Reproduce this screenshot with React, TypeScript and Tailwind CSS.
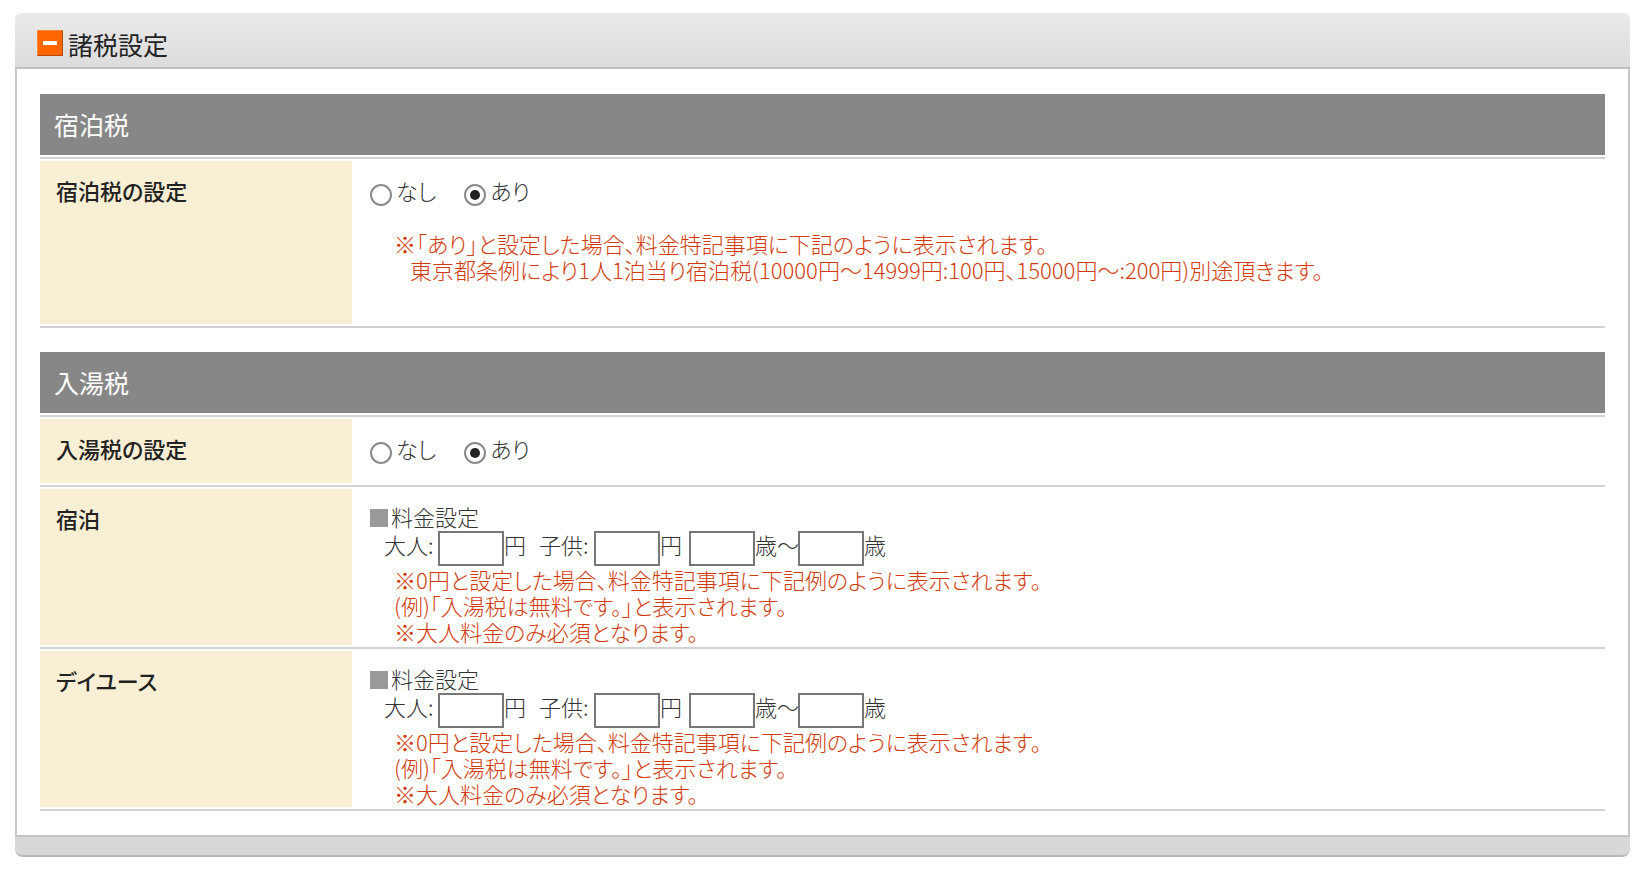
import React, { useState } from "react";

interface SectionProps {
  title: string;
  children: React.ReactNode;
}

const Section = ({ title, children }: SectionProps) => {
  return (
    <section>
      <div className="border-b-2 border-[#d2d2d2] pb-0.5">
        <h2 className="bg-[#878787] px-[14px] py-3 text-[25px] leading-[37px] font-normal text-white">
          {title}
        </h2>
      </div>
      {children}
    </section>
  );
};

interface RowProps {
  label: string;
  className?: string;
  children: React.ReactNode;
}

const Row = ({ label, className = "", children }: RowProps) => {
  return (
    <div className="flex border-b-2 border-[#d2d2d2] py-0.5">
      <h3 className="w-[312px] shrink-0 bg-[#f9efd5] px-4 pt-4 text-[22px] leading-[26px] font-medium text-[#222]">
        {label}
      </h3>
      <div className={`min-w-0 flex-1 pl-[18px] ${className}`}>{children}</div>
    </div>
  );
};

interface TaxRadioProps {
  name: string;
  label: string;
}

const TaxRadio = ({ name, label }: TaxRadioProps) => {
  const [value, setValue] = useState("あり");

  return (
    <div role="radiogroup" aria-label={label} className="flex gap-7">
      {["なし", "あり"].map((option) => (
        <label key={option} className="flex items-start gap-1">
          <input
            type="radio"
            name={name}
            value={option}
            checked={value === option}
            onChange={() => setValue(option)}
            className="mt-[7px] size-[22px] appearance-none rounded-full border-2 border-[#8a8a8a] bg-white p-1 checked:bg-[#222] checked:bg-clip-content"
          />
          {option}
        </label>
      ))}
    </div>
  );
};

const PriceInput = ({ label }: { label: string }) => {
  return (
    <input
      type="text"
      aria-label={label}
      className="h-[35px] w-[66px] border-2 border-[#777] bg-white px-1"
    />
  );
};

const PriceSetting = () => {
  return (
    <div>
      <div className="flex h-7 items-start gap-[3px]">
        <span className="mt-[6px] size-[18px] bg-[#999]" />
        料金設定
      </div>
      <div className="flex items-start pl-[14px] whitespace-nowrap">
        <span className="w-[54px]">大人:</span>
        <PriceInput label="大人料金" />
        <span className="w-[35px]">円</span>
        <span className="w-[55px]">子供:</span>
        <PriceInput label="子供料金" />
        <span className="w-[29px]">円</span>
        <PriceInput label="子供の年齢(下限)" />
        <span className="w-[43px]">歳～</span>
        <PriceInput label="子供の年齢(上限)" />
        <span>歳</span>
      </div>
      <div className="pl-6 text-[#d03a0c]">
        <p>※0円と設定した場合、料金特記事項に下記例のように表示されます。</p>
        <p>(例)「入湯税は無料です。」と表示されます。</p>
        <p>※大人料金のみ必須となります。</p>
      </div>
    </div>
  );
};

const App = () => {
  const [open, setOpen] = useState(true);

  return (
    <main
      lang="ja"
      className="bg-white pt-[13px] pr-5 pb-3 pl-[15px] font-['Noto_Sans_CJK_JP',sans-serif] text-[22px] leading-[26px] font-light text-[#333] [font-feature-settings:'palt']"
    >
      <header className="flex items-center gap-[5px] rounded-t-md border-b-2 border-[#c0c0c0] bg-linear-to-b from-[#eaeaea] to-[#dcdcdc] pt-[10px] pr-4 pb-1 pl-[22px]">
        <button
          type="button"
          aria-label="諸税設定の開閉"
          aria-expanded={open}
          onClick={() => setOpen(!open)}
          className="flex size-[26px] items-center justify-center border border-[#ff8a3c] border-r-[#b34a00] border-b-[#b34a00] bg-[#ff6600]"
        >
          <span className="h-1 w-[14px] bg-white" />
        </button>
        <h1 className="pt-0.5 text-[25px] leading-[38px] font-normal text-[#222]">
          諸税設定
        </h1>
      </header>

      {open && (
        <div className="flex flex-col gap-6 border-x-2 border-[#c8c8c8] px-[23px] pt-[25px] pb-6">
          <Section title="宿泊税">
            <Row label="宿泊税の設定" className="pt-4 pb-[42px]">
              <TaxRadio name="stayTax" label="宿泊税の設定" />
              <div className="pt-6 pl-6 text-[#d03a0c]">
                <p>
                  ※「あり」と設定した場合、料金特記事項に下記のように表示されます。
                </p>
                <p className="pl-4">
                  東京都条例により1人1泊当り宿泊税(10000円～14999円:100円、15000円～:200円)別途頂きます。
                </p>
              </div>
            </Row>
          </Section>

          <Section title="入湯税">
            <Row label="入湯税の設定" className="pt-4 pb-[19px]">
              <TaxRadio name="bathTax" label="入湯税の設定" />
            </Row>
            <Row label="宿泊" className="pt-[14px] pb-px">
              <PriceSetting />
            </Row>
            <Row label="デイユース" className="pt-[14px] pb-px">
              <PriceSetting />
            </Row>
          </Section>
        </div>
      )}

      <footer className="h-[22px] rounded-b-lg border-y-2 border-t-[#c4c4c4] border-b-[#b8b8b8] bg-[#d8d8d8]" />
    </main>
  );
};

export default App;
